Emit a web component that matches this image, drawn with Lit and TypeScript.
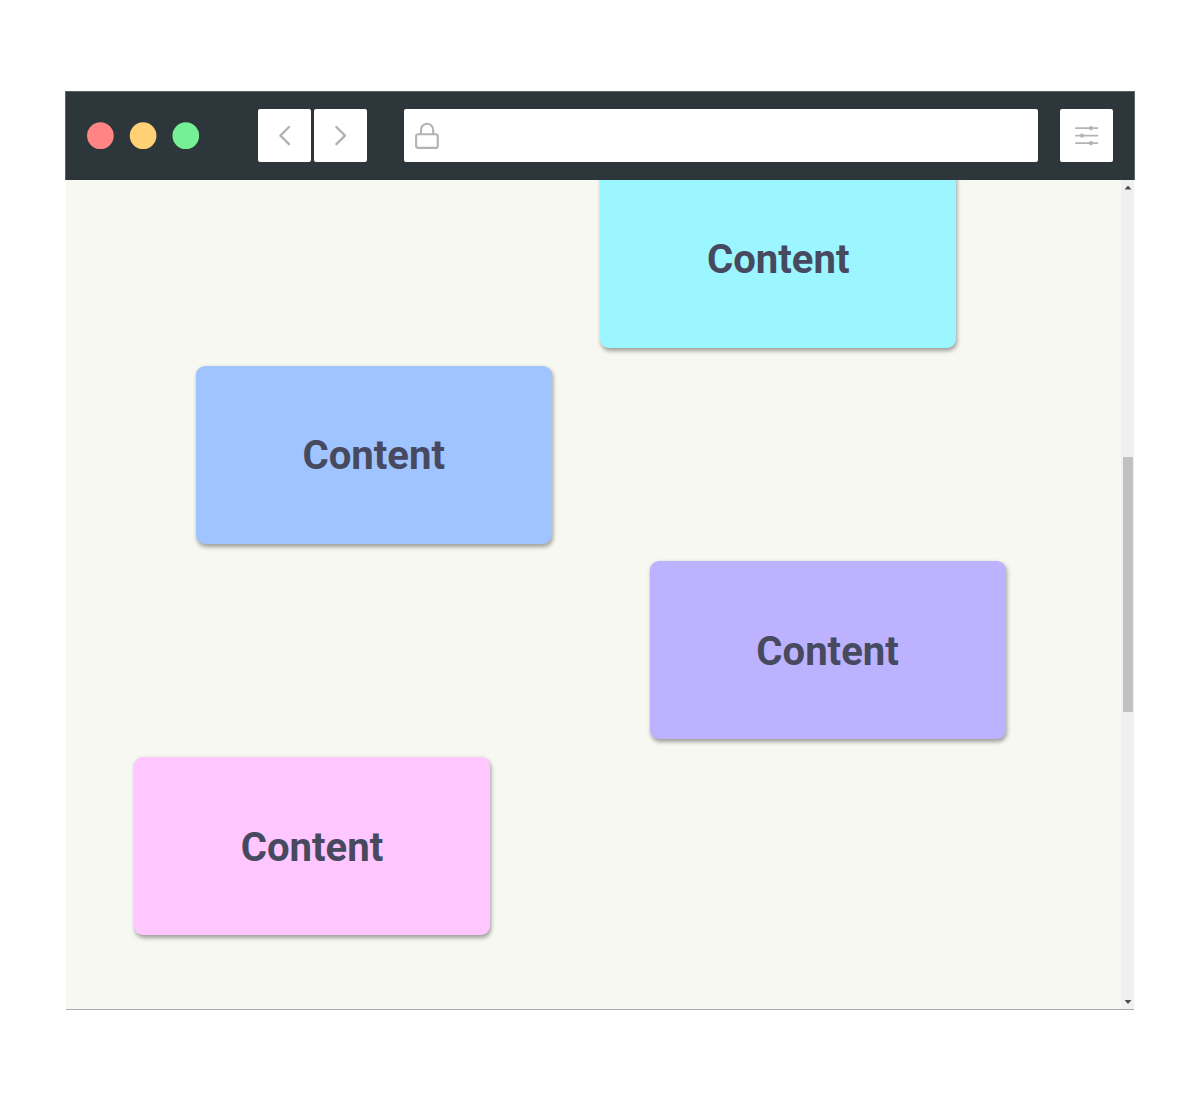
import { LitElement, html, css } from "lit";
import { customElement } from "lit/decorators.js";

interface Card {
  color: string;
  offset: number;
}

const CARDS: Card[] = [
  { color: "#9bf6ff", offset: 534.1 },
  { color: "#a0c4ff", offset: 129.7 },
  { color: "#bdb2ff", offset: 583.5 },
  { color: "#ffc6ff", offset: 67.9 },
];

@customElement("app-root")
export class AppRoot extends LitElement {
  static styles = css`
    :host {
      display: block;
      box-sizing: border-box;
      height: 1100px;
      padding: 91px 65px 90px;
      background: #fff;
      font-family: Roboto, "Liberation Sans", sans-serif;
    }
    * {
      box-sizing: border-box;
    }
    .window {
      display: flex;
      flex-direction: column;
      height: 919px;
    }
    .bar {
      display: flex;
      align-items: center;
      flex: none;
      height: 89px;
      padding: 0 20.6px 1px 20.5px;
      background: #2d363b;
      border: 1px solid #5b6266;
      border-bottom: 0;
    }
    .dots {
      flex: none;
      width: 171.5px;
    }
    .dots svg {
      stroke: none;
    }
    .red { fill: #ff8585; }
    .yellow { fill: #ffd074; }
    .green { fill: #76f095; }
    .nav {
      display: flex;
      gap: 3px;
      flex: none;
    }
    .box {
      display: flex;
      align-items: center;
      justify-content: center;
      width: 53.2px;
      height: 53.4px;
      background: #fff;
      border-radius: 2px;
      flex: none;
    }
    .address {
      display: flex;
      align-items: center;
      flex: 1;
      height: 53.4px;
      margin: 0 22px 0 36.5px;
      padding-left: 11px;
      background: #fff;
      border-radius: 2px;
    }
    svg {
      display: block;
      fill: none;
      stroke: #b3b3b3;
      stroke-linecap: round;
      stroke-linejoin: round;
    }
    .knob {
      fill: #b3b3b3;
      stroke: none;
    }
    .page {
      display: flex;
      flex: 1;
      min-height: 0;
      margin: 0 1px;
      background: #f7f8f1;
      border-bottom: 1px solid #aaa;
    }
    .content {
      display: flex;
      flex-direction: column;
      gap: 17.8px;
      flex: 1;
      overflow: hidden;
    }
    .card {
      display: flex;
      align-items: center;
      justify-content: center;
      flex: none;
      width: 356.2px;
      height: 178.1px;
      padding-top: 3.2px;
      border-radius: 9px;
      box-shadow: 1px 2.5px 4px rgba(0, 0, 0, 0.36);
      color: #474a5f;
      font-size: 40.1px;
      font-weight: 700;
      line-height: 1;
    }
    .card:first-child {
      margin-top: -10.4px;
    }
    .scroll {
      display: flex;
      flex-direction: column;
      align-items: center;
      width: 13px;
      padding-left: 1px;
      flex: none;
      background: #f0f0f1;
    }
    .thumb {
      width: 10px;
      height: 255.5px;
      margin-top: 267.2px;
      background: #c1c1c1;
    }
    .arrow {
      width: 7px;
      height: 4px;
      flex: none;
      background: #4d4d4d;
    }
    .up {
      margin-top: 5.5px;
      clip-path: polygon(50% 0, 100% 100%, 0 100%);
    }
    .down {
      margin-top: auto;
      margin-bottom: 5px;
      clip-path: polygon(0 0, 100% 0, 50% 100%);
    }
  `;

  render() {
    return html`
      <div class="window">
        <div class="bar">
          <div class="dots">
            <svg width="114" height="28" viewBox="0 0 114 28">
              <circle class="red" cx="13.4" cy="13.7" r="13.35" />
              <circle class="yellow" cx="56.1" cy="13.7" r="13.35" />
              <circle class="green" cx="98.8" cy="13.7" r="13.35" />
            </svg>
          </div>
          <div class="nav">
            <div class="box">
              <svg width="24" height="24" viewBox="0 0 24 24" stroke-width="2.4">
                <path d="M16 4 7.4 12.6l8.6 8.6" />
              </svg>
            </div>
            <div class="box">
              <svg width="24" height="24" viewBox="0 0 24 24" stroke-width="2.4">
                <path d="M7.4 4l8.6 8.6-8.6 8.6" />
              </svg>
            </div>
          </div>
          <div class="address">
            <svg width="24" height="28" viewBox="0 0 24 28" stroke-width="2.1">
              <rect x="1.1" y="13.2" width="21.7" height="13.7" rx="2" />
              <path d="M6 13.2V8.8a6 6 0 0 1 12.2 0v4.4" />
            </svg>
          </div>
          <div class="box">
            <svg width="24" height="24" viewBox="0 0 24 24" stroke-width="1.8">
              <path d="M1 5.2h21.4M1 12.7h21.4M1 20.2h21.4" />
              <circle class="knob" cx="16" cy="5.2" r="2.1" />
              <circle class="knob" cx="7" cy="12.7" r="2.1" />
              <circle class="knob" cx="16" cy="20.2" r="2.1" />
            </svg>
          </div>
        </div>
        <div class="page">
          <div class="content">
            ${CARDS.map(
              (card) => html`<div
                class="card"
                style="background:${card.color};margin-left:${card.offset}px"
              >
                Content
              </div>`
            )}
          </div>
          <div class="scroll">
            <span class="arrow up"></span>
            <span class="thumb"></span>
            <span class="arrow down"></span>
          </div>
        </div>
      </div>
    `;
  }
}
